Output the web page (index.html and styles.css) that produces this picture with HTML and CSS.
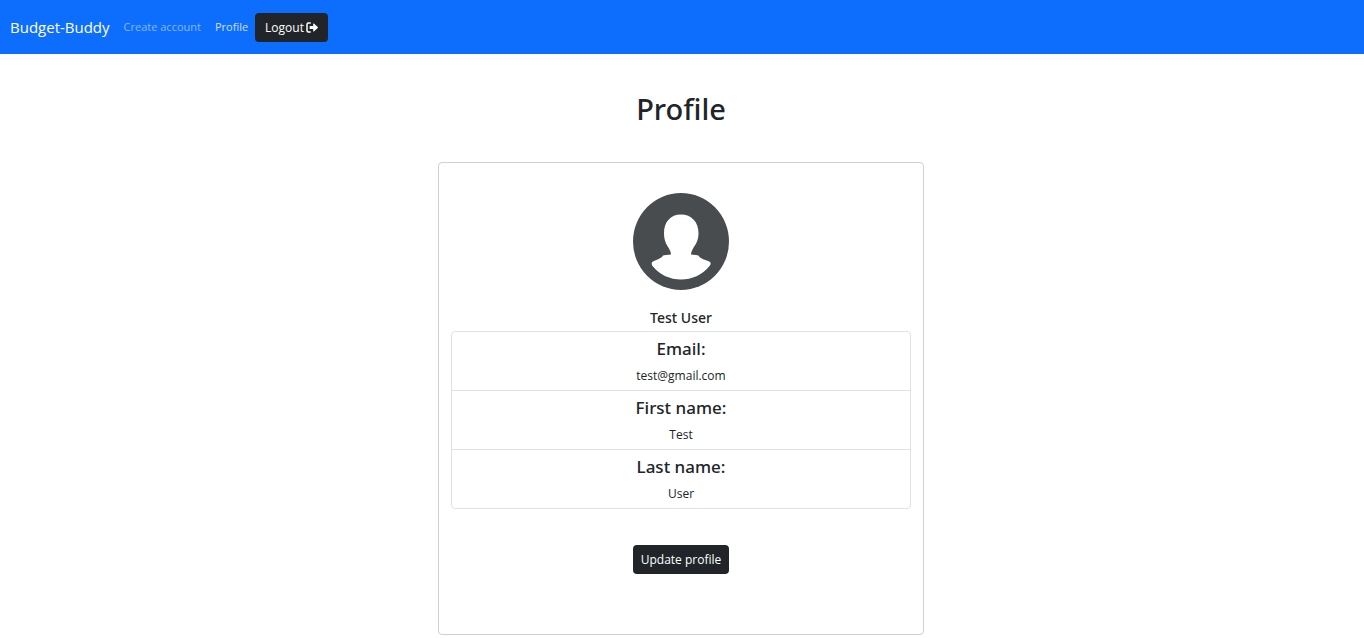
FILE: index.html
```html
<!DOCTYPE html>
<html lang="en">
<head>
<meta charset="utf-8">
<meta name="viewport" content="width=device-width, initial-scale=1">
<title>Budget-Buddy</title>
<link rel="stylesheet" href="styles.css">
</head>
<body>
<nav class="navbar">
  <a class="brand" href="#">Budget-Buddy</a>
  <a class="nav-link" href="#">Create account</a>
  <a class="nav-link active" href="#">Profile</a>
  <button class="btn logout" type="button">Logout
    <svg class="logout-icon" viewBox="0 0 12 11" aria-hidden="true">
      <path d="M4.2 1H2.5Q1 1 1 2.5v6Q1 10 2.5 10H4.2" fill="none" stroke="currentColor" stroke-width="1.5" stroke-linecap="round"/>
      <path d="M4.2 4h3V2q0-.8.7-.4l3.8 3.5q.4.4 0 .8L7.9 9.4q-.7.4-.7-.4V7h-3q-.6 0-.6-.6V4.600q0-.6.6-.6z" fill="currentColor"/>
    </svg>
  </button>
</nav>
<main class="page">
  <h1 class="title">Profile</h1>
  <section class="card">
    <svg class="avatar" viewBox="0 0 96 97" role="img" aria-label="User avatar">
      <ellipse cx="48" cy="48.500" rx="48" ry="48.500" fill="#484c4f"/>
      <path d="M48 21.500C37.500 21.500 31 29 31 40C31 48 33.500 51.500 36 55.500Q38 59 38 61.500L31 62.300Q29.500 62.500 29 64C26 66.500 22 67 19.200 69Q18 70.500 19.500 73C27 82 37 86.500 48 86.500S69 82 76.500 73Q78.500 70.500 77 69C74 67 69 66.500 66.500 64Q66 62.500 64.500 62.300L58 61.500Q58 59 60 55.500C62.500 51.500 65.500 48 65.500 40C65.500 29 58.500 21.500 48 21.500z" fill="#fff"/>
    </svg>
    <h2 class="user-name">Test User</h2>
    <ul class="details">
      <li class="detail"><h3 class="label">Email:</h3><p class="value">test@gmail.com</p></li>
      <li class="detail"><h3 class="label">First name:</h3><p class="value">Test</p></li>
      <li class="detail"><h3 class="label">Last name:</h3><p class="value">User</p></li>
    </ul>
    <button class="btn" type="button">Update profile</button>
  </section>
</main>
</body>
</html>
```
FILE: styles.css
```css
* { box-sizing: border-box; }
body {
  margin: 0;
  background: #fff;
  color: #212529;
  font: 12px/18px "Open Sans", "Noto Sans", sans-serif;
}
h1, h2, h3, p, ul { margin: 0; padding: 0; }
h1, h2, h3 {
  font-family: "Noto Sans", "Open Sans", sans-serif;
  font-weight: 500;
}
.navbar {
  display: flex;
  align-items: center;
  min-height: 54px;
  padding: 6px 10px;
  background: #0d6efd;
}
.brand {
  margin-right: 7px;
  color: #fff;
  font-size: 15px;
  line-height: 24px;
  text-decoration: none;
}
.nav-link {
  padding: 7px;
  color: rgba(255, 255, 255, .5);
  font-size: 11px;
  line-height: 20px;
  text-decoration: none;
}
.nav-link.active { color: rgba(255, 255, 255, .8); }
.btn {
  padding: 5px 8px;
  border: 0;
  border-radius: 4px;
  background: #212529;
  color: #fff;
  font: 12px/19px "Open Sans", "Noto Sans", sans-serif;
}
.logout {
  display: flex;
  align-items: center;
  gap: 2px;
  padding: 5px 10px;
}
.logout-icon { width: 12px; height: 11px; }
.page {
  display: flex;
  flex-direction: column;
  align-items: center;
  padding: 36px 14px 3px 12px;
}
.title {
  margin-bottom: 34px;
  font-size: 29px;
  line-height: 38px;
}
.card {
  display: flex;
  flex-direction: column;
  align-items: center;
  width: 100%;
  max-width: 486px;
  padding: 30px 12px 60px;
  border: 1px solid #d0d0d0;
  border-radius: 4px;
  text-align: center;
}
.avatar { width: 96px; height: 97px; }
.user-name {
  margin: 18px 0 3px;
  font-size: 14px;
  line-height: 20px;
}
.details {
  width: 100%;
  margin-bottom: 36px;
  border: 1px solid #dee2e6;
  border-radius: 4px;
  list-style: none;
}
.detail { padding: 5px 12px; }
.detail + .detail { border-top: 1px solid #dee2e6; }
.label {
  margin-bottom: 7px;
  font-size: 17px;
  line-height: 23px;
}
```
